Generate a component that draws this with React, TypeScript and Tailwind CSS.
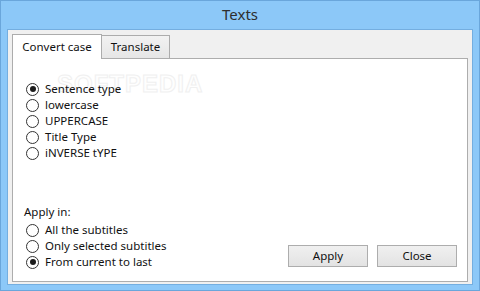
import React from "react";

const font = { fontFamily: '"Noto Sans", "Open Sans", sans-serif' };

function Radio({ label, checked }: { label: string; checked?: boolean }) {
  return (
    <div className="flex items-center h-[16px]">
      <span className="ml-[2px] w-[13px] h-[13px] rounded-full border border-[#333333] bg-white flex items-center justify-center">
        {checked && <span className="w-[6px] h-[6px] rounded-full bg-[#1c1c1c]" />}
      </span>
      <span className="ml-[6px] text-[11.5px] leading-none text-[#111111]">{label}</span>
    </div>
  );
}

function Btn({ label }: { label: string }) {
  return (
    <div className="w-[80px] h-[22px] border border-[#adadad] bg-gradient-to-b from-[#f0f0f0] to-[#e3e3e3] flex items-center justify-center text-[11.5px] text-[#111111]">
      {label}
    </div>
  );
}

export default function App() {
  return (
    <div
      className="w-[480px] h-[291px] bg-[#8cc8f8] border border-[#6aa6db] flex flex-col px-[6px] pb-[5px]"
      style={font}
    >
      <div className="h-[28px] flex items-center justify-center text-[15px] text-[#2e2e2e] pb-[1px]">Texts</div>
      <div className="flex-1 border border-[#74aee0] bg-[#f0f0f0] flex flex-col px-[4px] pt-[4px] pb-[2px]">
        <div className="flex h-[24px] items-end relative z-10">
          <div className="h-[25px] w-[90px] border border-b-0 border-[#acacac] bg-white flex items-center justify-center text-[11.5px] text-[#111111] pb-[1px] -mb-px">
            Convert case
          </div>
          <div className="h-[23px] w-[69px] -ml-px border border-b-0 border-[#acacac] bg-gradient-to-b from-[#f2f2f2] to-[#e6e6e6] flex items-center justify-center text-[11.5px] text-[#111111]">
            Translate
          </div>
        </div>
        <div className="flex-1 border border-[#adadad] bg-white relative flex flex-col pl-[11px] pr-[10px] pt-[22px] pb-[11px]">
          <div
            className="absolute left-[44px] top-[13px] text-[24px] font-bold tracking-[1px] text-[#fefefe] [-webkit-text-stroke:1px_#f0f0f0] leading-none select-none"
            style={{ fontFamily: '"Liberation Sans", sans-serif' }}
          >
            SOFTPEDIA
          </div>
          <div className="flex flex-col relative">
            <Radio label="Sentence type" checked />
            <Radio label="lowercase" />
            <Radio label="UPPERCASE" />
            <Radio label="Title Type" />
            <Radio label="iNVERSE tYPE" />
          </div>
          <div className="flex-1" />
          <div className="flex items-end justify-between">
            <div className="flex flex-col">
              <div className="h-[18px] flex items-center text-[11.5px] text-[#111111] mb-[1px]">Apply in:</div>
              <Radio label="All the subtitles" />
              <Radio label="Only selected subtitles" />
              <Radio label="From current to last" checked />
            </div>
            <div className="flex gap-[9px] mb-[3px]">
              <Btn label="Apply" />
              <Btn label="Close" />
            </div>
          </div>
        </div>
      </div>
    </div>
  );
}
